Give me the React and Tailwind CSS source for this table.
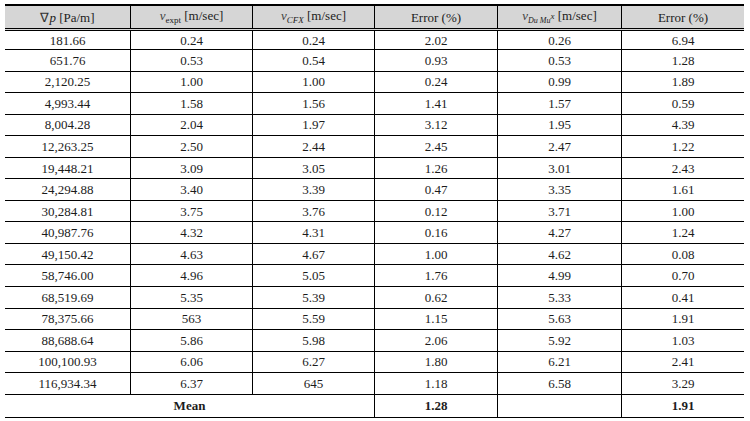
import React from "react";

const rows = [
  ["181.66", "0.24", "0.24", "2.02", "0.26", "6.94"],
  ["651.76", "0.53", "0.54", "0.93", "0.53", "1.28"],
  ["2,120.25", "1.00", "1.00", "0.24", "0.99", "1.89"],
  ["4,993.44", "1.58", "1.56", "1.41", "1.57", "0.59"],
  ["8,004.28", "2.04", "1.97", "3.12", "1.95", "4.39"],
  ["12,263.25", "2.50", "2.44", "2.45", "2.47", "1.22"],
  ["19,448.21", "3.09", "3.05", "1.26", "3.01", "2.43"],
  ["24,294.88", "3.40", "3.39", "0.47", "3.35", "1.61"],
  ["30,284.81", "3.75", "3.76", "0.12", "3.71", "1.00"],
  ["40,987.76", "4.32", "4.31", "0.16", "4.27", "1.24"],
  ["49,150.42", "4.63", "4.67", "1.00", "4.62", "0.08"],
  ["58,746.00", "4.96", "5.05", "1.76", "4.99", "0.70"],
  ["68,519.69", "5.35", "5.39", "0.62", "5.33", "0.41"],
  ["78,375.66", "563", "5.59", "1.15", "5.63", "1.91"],
  ["88,688.64", "5.86", "5.98", "2.06", "5.92", "1.03"],
  ["100,100.93", "6.06", "6.27", "1.80", "6.21", "2.41"],
  ["116,934.34", "6.37", "645", "1.18", "6.58", "3.29"],
];

const widths = ["w-[126px]", "w-[122px]", "w-[122px]", "w-[123px]", "w-[124px]", "w-[122px]"];

function Cell({ i, children, className = "" }) {
  return (
    <div
      className={`${widths[i]} flex items-center justify-center ${
        i < 5 ? "border-r border-black" : ""
      } ${className}`}
    >
      {children}
    </div>
  );
}

export default function App() {
  return (
    <div
      className="w-[750px] h-[421px] bg-white pt-[4px] pl-[5px] text-[13px] text-[#1c1c1c] leading-none"
      style={{ fontFamily: '"Liberation Serif", "Times New Roman", serif' }}
    >
      <div className="w-[739px] flex flex-col">
        {/* header */}
        <div className="flex h-[27px] bg-[#d6d6d6] border-t-2 border-black border-b-[3px] border-b-black border-double">
          <Cell i={0}>
            <span>
              <span className="font-light text-[#333]">∇</span>
              <i>p</i> [Pa/m]
            </span>
          </Cell>
          <Cell i={1}>
            <span>
              <i className="text-[#444]">v</i>
              <span className="text-[9px] align-[-3px]">expt</span> [m/sec]
            </span>
          </Cell>
          <Cell i={2}>
            <span>
              <i className="text-[#444]">v</i>
              <span className="text-[9px] align-[-3px] italic">CFX</span> [m/sec]
            </span>
          </Cell>
          <Cell i={3}>Error (%)</Cell>
          <Cell i={4}>
            <span>
              <i className="text-[#444]">v</i>
              <span className="text-[8px] align-[-3px] italic">Du Mu</span>
              <span className="text-[9px] align-[1px] italic">x</span> [m/sec]
            </span>
          </Cell>
          <Cell i={5}>Error (%)</Cell>
        </div>
        {rows.map((r, ri) => (
          <div
            key={ri}
            className={`flex border-b border-black ${ri === 0 ? "h-[19px]" : "h-[21.56px]"}`}
          >
            {r.map((v, ci) => (
              <Cell key={ci} i={ci}>
                {v}
              </Cell>
            ))}
          </div>
        ))}
        <div className="flex h-[23px] border-b border-black font-bold">
          <div className="w-[370px] flex items-center justify-center border-r border-black">Mean</div>
          <Cell i={3}>1.28</Cell>
          <Cell i={4}></Cell>
          <Cell i={5}>1.91</Cell>
        </div>
      </div>
    </div>
  );
}
